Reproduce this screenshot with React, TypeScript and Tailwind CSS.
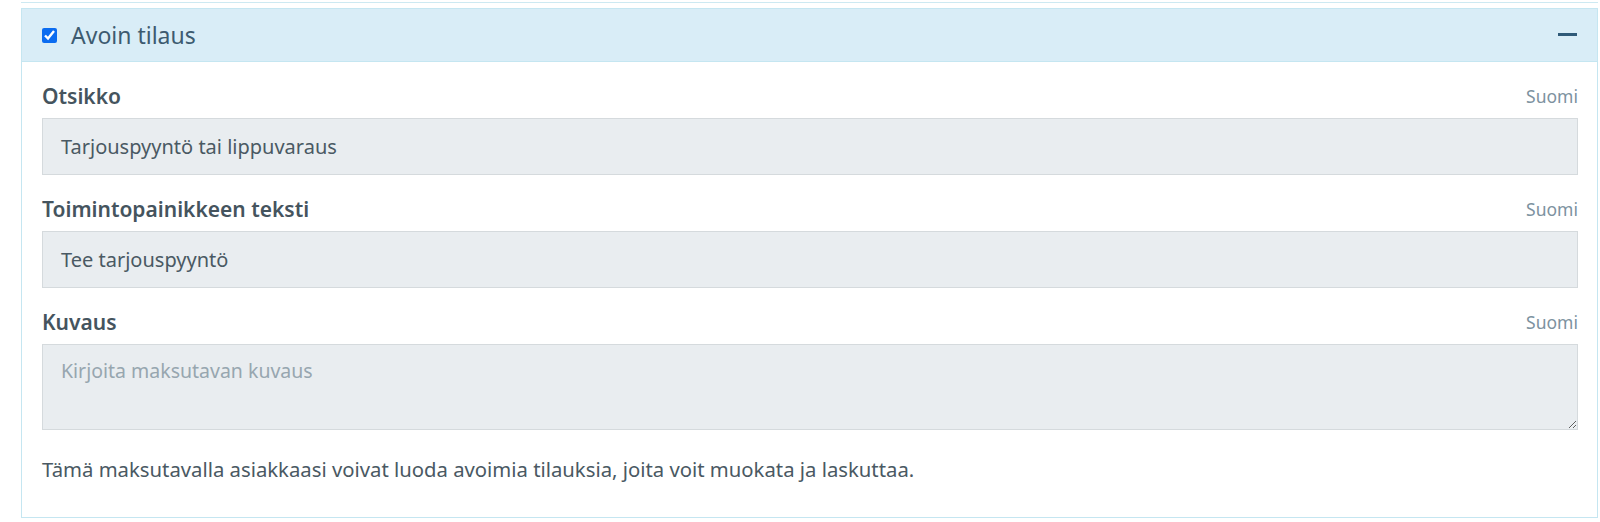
import React from 'react';

const fields = [
  { label: 'Otsikko', value: 'Tarjouspyyntö tai lippuvaraus' },
  { label: 'Toimintopainikkeen teksti', value: 'Tee tarjouspyyntö' },
];

const App: React.FC = () => {
  return (
    <div
      className="min-h-[522px] bg-white pl-[21px] pr-[2px] text-[#4a5963]"
      style={{ fontFamily: '"Noto Sans", "Open Sans", sans-serif' }}
    >
      <div className="h-[3px] border-b border-[#cde9f2]" />
      <div className="mt-[5px] border border-[#c5e6f1]">
        <div className="flex h-[53px] items-center justify-between border-b border-[#c5e6f1] bg-[#d9edf7] pl-[20px] pr-[20px]">
          <label className="flex items-center">
            <input
              type="checkbox"
              defaultChecked
              className="h-[15px] w-[15px] accent-[#0b6cf0]"
            />
            <span className="ml-[14px] text-[23px] leading-none text-[#3d5b70]">
              Avoin tilaus
            </span>
          </label>
          <span className="mb-[1px] block h-[3px] w-[19px] bg-[#2f5a78]" />
        </div>
        <div className="pl-[20px] pr-[19px] pt-[22px] pb-[36px]">
          {fields.map((field, key) => (
            <div key={key} className="mb-[22px]">
              <div className="mb-[10px] flex items-center justify-between leading-[24px]">
                <span className="text-[21px] font-semibold text-[#45545e]">
                  {field.label}
                </span>
                <span className="text-[17.5px] text-[#7d929f]">Suomi</span>
              </div>
              <div className="flex h-[57px] items-center border border-[#d5dadd] bg-[#e9edf0] px-[18px] text-[20px] text-[#4a5963]">
                {field.value}
              </div>
            </div>
          ))}
          <div>
            <div className="mb-[10px] flex items-center justify-between leading-[24px]">
              <span className="text-[21px] font-semibold text-[#45545e]">
                Kuvaus
              </span>
              <span className="text-[17.5px] text-[#7d929f]">Suomi</span>
            </div>
            <textarea
              readOnly
              placeholder="Kirjoita maksutavan kuvaus"
              className="block h-[86px] w-full border border-[#d5dadd] bg-[#e9edf0] px-[18px] py-[13px] text-[19.5px] leading-[26px] text-[#4a5963] outline-none placeholder:text-[#97a6af]"
            />
          </div>
          <p className="mt-[27px] text-[20.3px] leading-[24px] text-[#4a5963]">
            Tämä maksutavalla asiakkaasi voivat luoda avoimia tilauksia, joita voit muokata ja laskuttaa.
          </p>
        </div>
      </div>
    </div>
  );
};

export default App;
